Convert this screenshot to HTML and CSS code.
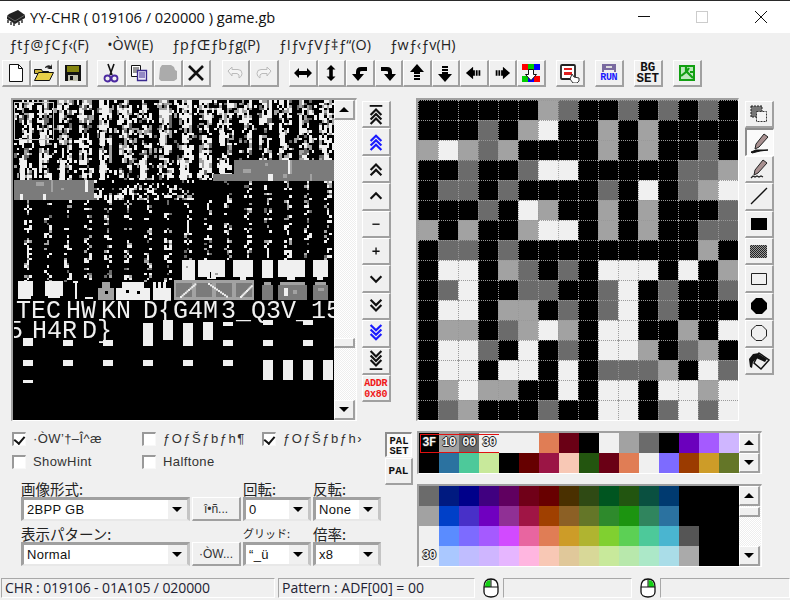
FILE: index.html
```html
<!DOCTYPE html>
<html lang="en">
<head>
<meta charset="utf-8">
<title>YY-CHR</title>
<link rel="stylesheet" href="styles.css">
</head>
<body>
<svg class="defs" width="0" height="0">
  <defs>
    <g id="chev"><path d="M4 8l6-6 6 6" fill="none" stroke-width="2.4"/></g>
    <path id="a-h" d="M1 10 6 5v3h8V5l5 5-5 5v-3H6v3z"/>
    <path id="a-c" d="M17 4h-6Q6 4 6 9v2H2l6 7 6-7h-4V9q0-1 2-1h5z"/>
    <path id="a-d" d="M10 1l7 8h-4v2H7V9H3zM7 12h6v2H7zM7 15h6v2H7z"/>
  </defs>
</svg>
<header class="titlebar">
  <svg class="appicon" width="20" height="17" viewBox="0 0 20 17"><path d="M3 5l9-4 7 5v3l-10 6-8-5V7z" fill="#222"/><path d="M1 7l8 5 10-6" fill="none" stroke="#666"/><path d="M2 11v3M5 13v3M8 14v3M13 13v3M16 11v3" stroke="#333" stroke-width="1.5"/></svg>
  <span class="title">YY-CHR ( 019106 / 020000 ) game.gb</span>
  <div class="winctl">
    <span class="wc"><svg width="14" height="14" viewBox="0 0 14 14"><path d="M1 6.500h12" stroke="#111"/></svg></span>
    <span class="wc"><svg width="14" height="14" viewBox="0 0 14 14"><rect x="1.500" y="1.500" width="11" height="11" fill="none" stroke="#ccc"/></svg></span>
    <span class="wc"><svg width="14" height="14" viewBox="0 0 14 14"><path d="M1 1l12 12M13 1L1 13" stroke="#111"/></svg></span>
  </div>
</header>
<nav class="menubar">
  <span>ƒtƒ@ƒCƒ‹(F)</span><span>•ÒW(E)</span><span>ƒpƒŒƒbƒg(P)</span><span>ƒIƒvƒVƒ‡ƒ“(O)</span><span>ƒwƒ‹ƒv(H)</span>
</nav>
<div class="toolbar">
  <button class="btn tb"><svg width="20" height="20" viewBox="0 0 20 20"><path d="M3.500 1.500h9l4 4v13h-13z" fill="#fff" stroke="#111"/><path d="M12.500 1.500v4h4" fill="none" stroke="#111"/></svg></button>
  <button class="btn tb"><svg width="22" height="20" viewBox="0 0 22 20"><path d="M1.500 6.500h7l1 2h6v2h-14z" fill="#c8b038" stroke="#111"/><path d="M1.500 17.500l4-8h15l-4 8z" fill="#e8d048" stroke="#111"/><path d="M12 4q3-3 6-1l1-2v5h-5l2-1q-2-1-4 0z" fill="#222"/></svg></button>
  <button class="btn tb"><svg width="20" height="20" viewBox="0 0 20 20"><path d="M2 2h16v16H2z" fill="#111"/><path d="M4 3h12v6H4z" fill="#858510"/><path d="M5 12h10v6H5z" fill="#c0c0b0"/><path d="M7 13h3v4H7z" fill="#111"/></svg></button>
  <button class="btn tb gap-s"><svg width="16" height="20" viewBox="0 0 16 20"><path d="M5 1l4 11M11 1L7 12" stroke="#111" stroke-width="1.6" fill="none"/><circle cx="4.500" cy="15.500" r="3" fill="none" stroke="#4a28a0" stroke-width="1.800"/><circle cx="11.500" cy="15.500" r="3" fill="none" stroke="#4a28a0" stroke-width="1.800"/></svg></button>
  <button class="btn tb"><svg width="20" height="20" viewBox="0 0 20 20"><path d="M2.500 2.500h9v11h-9z" fill="#fff" stroke="#111"/><path d="M4 5h6M4 7h6M4 9h6" stroke="#333"/><path d="M8.500 7.500h9v10h-9z" fill="#ece8f8" stroke="#3a2a90" stroke-width="1.300"/><path d="M10 10h6M10 12h6M10 14h6" stroke="#3a2a90"/></svg></button>
  <button class="btn tb"><svg width="22" height="20" viewBox="0 0 22 20"><path d="M3 5l2-3h9l3 2 1 3 2 1v8l-3 2H4l-2-2z" fill="#ababab"/></svg></button>
  <button class="btn tb"><svg width="20" height="20" viewBox="0 0 20 20"><path d="M3 3l14 14M17 3L3 17" stroke="#111" stroke-width="2.600"/></svg></button>
  <button class="btn tb gap-m"><svg width="20" height="20" viewBox="0 0 20 20"><path d="M3 8l4-4v2.500h6q4 0 4 4 0 3-3 4.500 1-4-2-4.500H7V13z" fill="#f4f4f4" stroke="#bbb"/></svg></button>
  <button class="btn tb"><svg width="20" height="20" viewBox="0 0 20 20"><path d="M17 8l-4-4v2.500H7q-4 0-4 4 0 3 3 4.500-1-4 2-4.500h5V13z" fill="#f4f4f4" stroke="#bbb"/></svg></button>
  <button class="btn tb gap-m"><svg width="20" height="20" viewBox="0 0 20 20"><use href="#a-h"/></svg></button>
  <button class="btn tb"><svg class="rot90" width="18" height="18" viewBox="0 0 20 20"><use href="#a-h"/></svg></button>
  <button class="btn tb"><svg width="20" height="20" viewBox="0 0 20 20"><use href="#a-c"/></svg></button>
  <button class="btn tb"><svg class="flipx" width="20" height="20" viewBox="0 0 20 20"><use href="#a-c"/></svg></button>
  <button class="btn tb"><svg width="20" height="20" viewBox="0 0 20 20"><use href="#a-d"/></svg></button>
  <button class="btn tb"><svg class="rot180" width="20" height="20" viewBox="0 0 20 20"><use href="#a-d"/></svg></button>
  <button class="btn tb"><svg class="rot270" width="18" height="18" viewBox="0 0 20 20"><use href="#a-d"/></svg></button>
  <button class="btn tb"><svg class="rot90" width="18" height="18" viewBox="0 0 20 20"><use href="#a-d"/></svg></button>
  <button class="btn tb"><svg width="20" height="20" viewBox="0 0 20 20"><path d="M1 1h6v6H1z" fill="#f00"/><path d="M7 1h6v6H7zM1 13h6v6H1z" fill="#0c0"/><path d="M13 1h6v6h-6zM7 13h6v6H7z" fill="#00f"/><path d="M13 13h6v6h-6z" fill="#f00"/><path d="M7.500 6.500h5v5h3l-5.500 6-5.500-6h3z" fill="#fff" stroke="#111"/></svg></button>
  <button class="btn tb gap-m"><svg width="22" height="20" viewBox="0 0 22 20"><rect x="2" y="2" width="14" height="14" rx="1" fill="#fff" stroke="#222" stroke-width="1.800"/><path d="M5 5h8v2H5zM5 9h8v3H5z" fill="#e02020"/><path d="M13 11l2 3 5 1v3l-2 2h-4l-3-4z" fill="#fff" stroke="#333"/></svg></button>
  <button class="btn tb gap-l run"><svg width="18" height="10" viewBox="0 0 18 10"><path d="M2 1h14v8h-2V7H4v2H2z" fill="#7a6aa0"/><path d="M6 3h6v2H6z" fill="#ddd"/></svg><span class="runlabel">RUN</span></button>
  <button class="btn tb gap-l bitlabel">BG<br>SET</button>
  <button class="btn tb gap-l"><svg width="20" height="20" viewBox="0 0 20 20"><path d="M2 2h16v16H2z" fill="#12a012"/><path d="M4 4h12v12H4z" fill="#bde8bd"/><path d="M9 4v5L4 13M9 8l7 7M12 5l-2 3M13 9h3" stroke="#12a012" stroke-width="2.200" fill="none"/></svg></button>
</div>

<main class="work">
  <section class="viewer">
    <div class="chrwrap">
      <canvas id="chr" class="chr" width="320" height="320"></canvas>
      <div class="selbox"></div>
      <div class="chrtext line1"><span>TEC</span><span class="w1">HW</span><span class="w1">KN</span><span class="w2">D{G4M</span><span class="w3">3_Q3V_15</span></div>
      <div class="chrtext line2"><span>5</span><span class="w4">H4</span><span>R</span><span class="w1">D}</span></div>
    </div>
    <div class="vscroll tall">
      <button class="btn sb"><i class="tri-up"></i></button>
      <div class="track"><button class="btn thumb thumb-chr"></button></div>
      <button class="btn sb"><i class="tri-dn"></i></button>
    </div>
  </section>

  <div class="navcol">
    <button class="btn nb"><svg class="blk" width="18" height="22" viewBox="0 0 20 24"><path d="M3 2h14v2H3z" stroke="none"/><use href="#chev" y="5"/><use href="#chev" y="10"/><use href="#chev" y="15"/></svg></button>
    <button class="btn nb"><svg class="blu" width="18" height="22" viewBox="0 0 20 24"><use href="#chev" y="3"/><use href="#chev" y="8"/><use href="#chev" y="13"/></svg></button>
    <button class="btn nb"><svg class="blk" width="18" height="18" viewBox="0 0 20 20"><use href="#chev" y="3"/><use href="#chev" y="9"/></svg></button>
    <button class="btn nb"><svg class="blk thin" width="18" height="18" viewBox="0 0 20 20"><use href="#chev" y="5"/></svg></button>
    <button class="btn nb"><svg class="blk" width="18" height="18" viewBox="0 0 20 20"><path d="M6 9.500h8v1.500H6z" stroke="none"/></svg></button>
    <button class="btn nb"><svg class="blk" width="18" height="18" viewBox="0 0 20 20"><path d="M6 9.500h8v1.500H6zM9.300 6h1.500v8H9.300z" stroke="none"/></svg></button>
    <button class="btn nb"><svg class="blk thin flipy" width="18" height="18" viewBox="0 0 20 20"><use href="#chev" y="5"/></svg></button>
    <button class="btn nb"><svg class="blk flipy" width="18" height="18" viewBox="0 0 20 20"><use href="#chev" y="3"/><use href="#chev" y="9"/></svg></button>
    <button class="btn nb"><svg class="blu flipy" width="18" height="22" viewBox="0 0 20 24"><use href="#chev" y="3"/><use href="#chev" y="8"/><use href="#chev" y="13"/></svg></button>
    <button class="btn nb"><svg class="blk flipy" width="18" height="22" viewBox="0 0 20 24"><path d="M3 2h14v2H3z" stroke="none"/><use href="#chev" y="5"/><use href="#chev" y="10"/><use href="#chev" y="15"/></svg></button>
    <button class="btn nb addr">ADDR<br>0x80</button>
  </div>

  <section class="editor"><div id="grid" class="grid"></div></section>

  <div class="toolcol">
    <button class="btn nb"><svg width="20" height="20" viewBox="0 0 20 20"><path d="M2 2h11v11H2z" fill="#777" stroke="#222" stroke-dasharray="2 1"/><path d="M7.500 7.500h10v10h-10z" fill="#f4f4f4" stroke="#333" stroke-dasharray="2 1"/></svg></button>
    <button class="btn nb pressed"><svg width="22" height="22" viewBox="0 0 22 22"><path d="M15 2l4 3-9 10-4 2 1-5z" fill="#a89090" stroke="#222"/><path d="M2 20l5-2h12l-8 1-8 2z" fill="#111" stroke="#111"/></svg></button>
    <button class="btn nb"><svg width="22" height="22" viewBox="0 0 22 22"><path d="M15 2l4 3-9 10-4 2 1-5z" fill="#a89090" stroke="#222"/><path d="M3 20l2-2 2 1 2-1 2 1 2-1 2 1" fill="none" stroke="#222" stroke-width="1.300"/></svg></button>
    <button class="btn nb"><svg width="20" height="20" viewBox="0 0 20 20"><path d="M2 18L18 2" stroke="#111" stroke-width="1.300"/></svg></button>
    <button class="btn nb"><svg width="18" height="12" viewBox="0 0 18 12"><path d="M1 0h16v12H1z" fill="#000"/></svg></button>
    <button class="btn nb"><span class="dither"></span></button>
    <button class="btn nb"><svg width="18" height="12" viewBox="0 0 18 12"><path d="M1.500.5h15v11h-15z" fill="none" stroke="#222"/></svg></button>
    <button class="btn nb"><svg width="18" height="18" viewBox="0 0 18 18"><path d="M6 1h6l5 5v6l-5 5H6l-5-5V6z" fill="#000"/></svg></button>
    <button class="btn nb"><svg width="18" height="18" viewBox="0 0 18 18"><path d="M6 1.500h6l4.500 4.500v6L12 16.500H6L1.500 12V6z" fill="none" stroke="#222"/></svg></button>
    <button class="btn nb"><svg width="22" height="20" viewBox="0 0 22 20"><path d="M11 2l10 7-8 9-7-6z" fill="#eee" stroke="#111" stroke-width="1.500"/><path d="M11 2L5 3 1 8l1 8 2 1 1-6 3-3z" fill="#111"/><path d="M8 7l9 4 2-3-8-5z" fill="#111"/></svg></button>
  </div>
</main>

<section class="lower">
  <div class="controls">
    <div class="checks">
      <label class="chk"><i class="box on"></i>·ÒW’†–Î^æ</label>
      <label class="chk wide"><i class="box"></i>ƒOƒŠƒbƒh¶</label>
      <label class="chk wide"><i class="box on"></i>ƒOƒŠƒbƒh›</label>
      <label class="chk"><i class="box"></i>ShowHint</label>
      <label class="chk"><i class="box"></i>Halftone</label>
    </div>
    <div class="formrow first">
      <div class="field f-wide"><span class="jp">画像形式:</span><div class="combo"><span>2BPP GB</span><i class="drop"></i></div></div>
      <button class="btn act">î•ñ...</button>
      <div class="field f-sm"><span class="jp">回転:</span><div class="combo"><span>0</span><i class="drop"></i></div></div>
      <div class="field f-sm"><span class="jp">反転:</span><div class="combo"><span>None</span><i class="drop"></i></div></div>
    </div>
    <div class="formrow">
      <div class="field f-wide"><span class="jp">表示パターン:</span><div class="combo"><span>Normal</span><i class="drop"></i></div></div>
      <button class="btn act">·ÒW...</button>
      <div class="field f-sm"><span class="jp narrow">グリッド:</span><div class="combo"><span>“_ü</span><i class="drop"></i></div></div>
      <div class="field f-sm"><span class="jp">倍率:</span><div class="combo"><span>x8</span><i class="drop"></i></div></div>
    </div>
  </div>
  <div class="palcol">
    <div class="palbtns">
      <button class="btn palset pressed">PAL<br>SET</button>
      <button class="btn palbtn">PAL</button>
    </div>
    <div class="palframes">
      <div class="frame fr1">
        <div class="selbar"><div id="pal1" class="swatches two"></div><div class="redsel"></div></div>
        <div class="vscroll">
          <button class="btn sb"><i class="tri-up"></i></button>
          <button class="btn sb"><i class="tri-dn"></i></button>
        </div>
      </div>
      <div class="frame fr2">
        <div id="pal2" class="swatches four"></div>
        <div class="vscroll">
          <button class="btn sb"><i class="tri-up"></i></button>
          <div class="track"><button class="btn thumb"></button></div>
          <button class="btn sb"><i class="tri-dn"></i></button>
        </div>
      </div>
    </div>
  </div>
</section>

<footer class="status">
  <div class="panel p1">CHR : 019106 - 01A105 / 020000</div>
  <div class="panel p2">Pattern : ADF[00] = 00</div>
  <svg class="mouse" width="16" height="20" viewBox="0 0 16 20"><path d="M8 1C3 1 1 4 1 9v5c0 3 3 5 7 5s7-2 7-5V9c0-5-2-8-7-8z" fill="#fff" stroke="#111" stroke-width="1.300"/><path d="M7.500 2C4 2.200 2 4.500 2 9h5.500z" fill="#12d012"/><path d="M1 9h14M8 1v8" stroke="#111"/></svg>
  <div class="panel p3"></div>
  <svg class="mouse" width="16" height="20" viewBox="0 0 16 20"><path d="M8 1C3 1 1 4 1 9v5c0 3 3 5 7 5s7-2 7-5V9c0-5-2-8-7-8z" fill="#fff" stroke="#111" stroke-width="1.300"/><path d="M8.500 2C12 2.200 14 4.500 14 9H8.500z" fill="#12d012"/><path d="M1 9h14M8 1v8" stroke="#111"/></svg>
  <div class="panel p4"></div>
</footer>
<script src="script.js"></script>
</body>
</html>
```
FILE: styles.css
```css
* { box-sizing: border-box; }
html, body { margin: 0; padding: 0; }
body {
  width: 790px; height: 600px; overflow: hidden;
  background: #f0f0f0; color: #111;
  font-family: "Liberation Sans", Arial, sans-serif; font-size: 13px;
  display: flex; flex-direction: column;
}
.defs { position: absolute; }
.titlebar {
  height: 33px; flex: none; background: #fff; border-top: 1px solid #2a2a2a;
  display: flex; align-items: center; padding-left: 6px;
}
.appicon { flex: none; margin-top: 1px; }
.title { margin-left: 4px; font: 14.6px "Open Sans", sans-serif; color: #111; white-space: nowrap; }
.winctl { margin-left: auto; display: flex; }
.wc { width: 58.5px; height: 32px; display: flex; align-items: center; justify-content: center; }
.menubar {
  height: 25px; flex: none; display: flex; align-items: center; gap: 18.5px; padding: 0 0 3px 9px;
  font: 14.3px "Open Sans", sans-serif; color: #222;
}
.toolbar { height: 32px; flex: none; display: flex; padding: 2px 0 0 2px; }

.btn {
  margin: 0; padding: 0; background: #f0f0f0; color: #111;
  border-style: solid; border-width: 1px 2px 2px 1px;
  border-color: #fff #a0a0a0 #a0a0a0 #fff;
  display: flex; align-items: center; justify-content: center; flex-direction: column;
}
.btn.pressed {
  border-color: #8c8c8c #fff #fff #8c8c8c; border-width: 2px 1px 1px 2px;
  background: #fafafa;
}
.tb { width: 28.500px; height: 27px; flex: none; }
.gap-s { margin-left: 9.500px; }
.gap-m { margin-left: 10.500px; }
.gap-l { margin-left: 10.500px; }
.rot90 { transform: rotate(90deg); }
.rot180 { transform: rotate(180deg); }
.rot270 { transform: rotate(270deg); }
.flipx { transform: scaleX(-1); }
.flipy { transform: scaleY(-1); }
.run { gap: 0; }
.runlabel { font: 700 10px/10px "Liberation Mono", monospace; color: #1a1aff; letter-spacing: -.3px; }
.bitlabel { font: 700 12.5px/11px "Liberation Mono", monospace; color: #111; display: block; text-align: center; padding-top: 1px; }

.work { height: 340px; flex: none; display: flex; align-items: flex-start; padding: 8px 0 0 11px; }
.viewer {
  width: 346px; height: 323px; flex: none; display: flex; background: #000;
  border-style: solid; border-width: 2px 1px 1px 2px; border-color: #a0a0a0 #fff #fff #a0a0a0;
  padding-left: 1px;
}
.chrwrap { position: relative; width: 320px; height: 320px; overflow: hidden; flex: none; }
.chr { display: block; width: 320px; height: 320px; }
.selbox { position: absolute; left: 0; top: 2px; width: 40px; height: 38px; border: 1px solid #c8c8c8; }
.chrtext {
  position: absolute; display: flex; white-space: pre; color: #f0f0f0;
  font: 25px/20px "Liberation Mono", monospace;
}
.line1 { left: 2px; top: 202px; }
.line2 { left: -6px; top: 222px; }
.w1 { margin-left: 5px; }
.w2 { margin-left: 12px; }
.w3 { margin-left: 3px; }
.w4 { margin-left: 9px; }

.vscroll { width: 22px; flex: none; display: flex; flex-direction: column; background: #f0f0f0; }
.sb { width: 21px; height: 20px; flex: none; }
.tri-up, .tri-dn { display: block; width: 0; height: 0; border-left: 5px solid transparent; border-right: 5px solid transparent; }
.tri-up { border-bottom: 5px solid #000; }
.tri-dn { border-top: 5px solid #000; }
.track { flex: 1; position: relative; background: repeating-conic-gradient(#fff 0 25%, #eee 0 50%) 0 0 / 2px 2px; }
.thumb { width: 21px; height: 10px; position: absolute; left: 0; top: 1px; }
.thumb-chr { top: 218px; }

.navcol { width: 28.500px; flex: none; margin: 3px 0 0 5px; display: flex; flex-direction: column; }
.toolcol { width: 28.500px; flex: none; margin: 3px 0 0 6px; display: flex; flex-direction: column; }
.nb { height: 27.400px; width: 28.500px; flex: none; }
.blk { stroke: #111; fill: #111; }
.blu { stroke: #1a1aff; fill: #1a1aff; }
.thin { stroke-width: .7; }
.blk use, .blu use { fill: none; }
.addr { font: 700 10px/11px "Liberation Mono", monospace; color: #f01818; display: block; text-align: center; padding-top: 2px; letter-spacing: -.3px; }

.editor {
  width: 323px; height: 323px; flex: none; margin-left: 25.500px;
  border-style: solid; border-width: 2px 1px 1px 2px; border-color: #a0a0a0 #fff #fff #a0a0a0;
}
.grid { display: grid; grid-template-columns: repeat(16, 20px); grid-auto-rows: 20px; }
.grid i { display: block; border-top: 1px dotted #999; border-left: 1px dotted #999; }
.k { background: #000; }
.d { background: #6b6b6b; }
.l { background: #a2a2a2; }
.w { background: #f0f0f0; }
.dither { display: block; width: 17px; height: 13px; background: repeating-conic-gradient(#222 0 25%, #999 0 50%) 0 0 / 2px 2px; }

.lower { height: 148px; flex: none; display: flex; padding-top: 1px; }
.controls { width: 373px; margin-left: 12px; flex: none; }
.checks { display: grid; grid-template-columns: 130px 120px 1fr; grid-auto-rows: 23px; height: 50px; padding-top: 1px; }
.chk { display: flex; align-items: flex-start; gap: 7px; font-size: 13px; letter-spacing: .4px; line-height: 14px; color: #333; white-space: nowrap; }
.chk.wide { letter-spacing: 1.5px; }
.box {
  width: 14px; height: 14px; flex: none; background: #fff; position: relative;
  border-style: solid; border-width: 2px 1px 1px 2px; border-color: #999 #f8f8f8 #f8f8f8 #999;
}
.box.on::after {
  content: ""; position: absolute; left: 2px; top: 0px; width: 5px; height: 8px;
  border: solid #111; border-width: 0 2px 2px 0; transform: rotate(40deg);
}
.formrow { display: flex; margin-left: 9px; align-items: flex-end; height: 39px; }
.formrow.first { margin-top: 1px; margin-bottom: 6px; }
.field { display: flex; flex-direction: column; flex: none; }
.f-wide { width: 169px; }
.f-sm { width: 68px; margin-left: 2px; }
.jp { font: 14.500px/13px "Noto Sans CJK JP", sans-serif; height: 15px; color: #222; white-space: nowrap; }
.narrow { font-size: 11px; }
.combo {
  height: 24px; background: #fff; display: flex; align-items: center; padding-left: 3px;
  border-style: solid; border-width: 3px 3px 2px 3px; border-color: #a0a0a0 #c4c4c4 #e8e8e8 #a0a0a0;
  letter-spacing: .3px; white-space: nowrap; overflow: hidden;
}
.combo span { flex: 1; }
.drop {
  width: 19px; height: 19px; flex: none; background: #f0f0f0; position: relative;
}
.drop::after {
  content: ""; position: absolute; left: 4px; top: 7px; border-left: 5px solid transparent; border-right: 5px solid transparent; border-top: 5px solid #000;
}
.act { width: 49px; height: 24px; flex: none; margin-left: 2px; font: 12px "Liberation Sans", sans-serif; color: #333; }

.palcol { flex: none; display: flex; }
.palbtns { width: 28px; margin-top: 0; display: flex; flex-direction: column; flex: none; padding-top: 1px; }
.palset { width: 27px; height: 25px; font: 700 10.500px/10px "Liberation Mono", monospace; display: block; text-align: center; padding-top: 1px; }
.palbtn { width: 28px; height: 27px; margin-top: 1px; font: 700 11px "Liberation Mono", monospace; }
.palframes { margin-left: 4px; }
.frame {
  width: 345px; display: flex; background: #000;
  border-style: solid; border-width: 2px 1px 1px 2px; border-color: #a0a0a0 #fff #fff #a0a0a0;
}
.fr1 { height: 43px; }
.fr2 { height: 83px; margin-top: 10px; }
.swatches { display: grid; grid-template-columns: repeat(16, 20px); grid-auto-rows: 20px; width: 320px; flex: none; }
.swatches i { display: flex; align-items: center; justify-content: center; font: 700 12px "Liberation Mono", monospace; color: #f4f4f4; text-shadow: -1px 0 #222, 1px 0 #222, 0 -1px #222, 0 1px #222; letter-spacing: -.5px; }
.selbar { position: relative; width: 320px; flex: none; }
.redsel { position: absolute; left: 1px; top: 1px; width: 79px; height: 19px; border: 1px solid #e01010; border-right: 0; }

.status { height: 20px; flex: none; display: flex; align-items: stretch; padding-left: 1px; }
.panel {
  border-style: solid; border-width: 1px; border-color: #a8a8a8 #fff #fff #a8a8a8; height: 20px;
  font: 14px/18px "Open Sans", sans-serif; color: #223; padding-left: 3px; white-space: nowrap; overflow: hidden;
}
.p1 { width: 274px; letter-spacing: -.1px; }
.p2 { width: 197px; margin-left: 3px; }
.p3 { width: 129px; margin-left: 4px; }
.p4 { width: 130px; margin-left: 3px; }
.mouse { flex: none; margin-left: 8px; }
.mouse + .panel { margin-left: 4px; }
```
FILE: script.js
```js
(function () {
  var K = '#000', D = '#6b6b6b', L = '#a2a2a2', W = '#f0f0f0', G = '#7b7b7b';

  /* ---------- pattern editor ---------- */
  var rows = [
    'KKKKKKLDKKDKDKDK','KKKDKLWKKLKLKKKK','LWLDLKKKKLKLKKDK','KKDKKDWWKKKKKDDL',
    'KDDKDKKKKDKWKDLW','KKKDKWLKKLKLKKKD','LKLKKLWWKLKLKKDD','KDDKDKKKKKKKKKLK',
    'KWWKLDKDKWWWKWKL','KDWKKDDKKDWKDKKD','KWWKLLKDKDWKDKKK','KLLKDLWLKWWKKLKW',
    'KWWDKWKDKWWLKDLK','KWWKWWKWKDDDLKWD','KLWLLKKWKWWKWWLW','KDLKKKDKKWWKDWDW'
  ];
  var grid = document.getElementById('grid');
  rows.forEach(function (r) {
    r.split('').forEach(function (c) {
      var cell = document.createElement('i');
      cell.className = c.toLowerCase();
      grid.appendChild(cell);
    });
  });

  /* ---------- palettes ---------- */
  function swatches(id, colors, labels) {
    var host = document.getElementById(id);
    colors.forEach(function (c, i) {
      var s = document.createElement('i');
      s.style.backgroundColor = c;
      if (labels[i]) s.textContent = labels[i];
      host.appendChild(s);
    });
  }
  swatches('pal1', [
    '#000','#a2a2a2','#6b6b6b','#f0f0f0','#f0f0f0','#f0f0f0','#e07d55','#6a0015',
    '#000','#f0f0f0','#a2a2a2','#6b6b6b','#000','#6b00bd','#a55aff','#cfb6ff',
    '#000','#2b72a0','#4dc99a','#c8e99b','#000','#660000','#9b1545','#f8c8b5',
    '#23550f','#6a0015','#e07d55','#f0f0f0','#7d6bff','#9b3b00','#cd9c28','#647628'
  ], { 0: '3F', 1: '10', 2: '00', 3: '30' });
  swatches('pal2', [
    '#6b6b6b','#001a80','#00008a','#400080','#600060','#700018','#680000','#4a3000',
    '#2f4a14','#005520','#225510','#0a5040','#003a70','#000','#000','#000',
    '#a2a2a2','#0040c8','#4830c8','#7000c0','#903095','#a01545','#a04000','#8c6025',
    '#647628','#2e8a2c','#1c9410','#30855e','#2b72a0','#000','#000','#000',
    '#f0f0f0','#5a8cff','#7d6bff','#a55aff','#d24aff','#e865a0','#e07d55','#cd9c28',
    '#b0b430','#80d030','#5cd055','#4dc99a','#4ab5d0','#555','#000','#000',
    '#f0f0f0','#aac8ff','#c0bdff','#cfb6ff','#e6b6ff','#ffb6e0','#f8c8b5','#e0c89a',
    '#d8d898','#c8e99b','#b8e8ac','#ace8c8','#aadde8','#aaa','#000','#000'
  ], { 48: '30' });

  /* ---------- CHR sheet (128x128 tiles scaled 2.5x) ---------- */
  var ctx = document.getElementById('chr').getContext('2d');
  ctx.fillStyle = K;
  ctx.fillRect(0, 0, 320, 320);
  var seed = 90210;
  function rnd() { seed = (seed * 1664525 + 1013904223) >>> 0; return seed / 4294967296; }
  function px(x, y, c) {
    var x0 = Math.round(x * 2.5), y0 = Math.round(y * 2.5);
    ctx.fillStyle = c;
    ctx.fillRect(x0, y0, Math.round((x + 1) * 2.5) - x0, Math.round((y + 1) * 2.5) - y0);
  }
  /* rect given in page coordinates */
  function R(x, y, w, h, c) { ctx.fillStyle = c; ctx.fillRect(x - 14, y - 100, w, h); }
  function tone() { var r = rnd(); return r < 0.62 ? W : r < 0.85 ? L : D; }

  var x, y, tx, ty, cx, p;
  var cols = [];
  for (x = 0; x < 128; x += 1) {
    /* per column density, with a black gutter in every tile */
    var c8 = x & 7;
    cols[x] = (c8 === 0 || c8 === 1 || c8 === 7) ? 0.08 : (0.3 + rnd() * 0.35);
  }
  for (y = 0; y < 80; y += 1) {
    for (x = 0; x < 128; x += 1) {
      tx = x >> 3; ty = y >> 3; cx = x & 7;
      if (ty < 4) {
        p = cols[x];
        if (ty === 0) p += 0.14;
        if (rnd() < p) {
          var t = tone();
          px(x, y, t);
          if (y < 31 && rnd() < 0.4) { px(x, y + 1, t); }
        }
      } else if (ty === 4 && tx >= 4 && tx <= 8) {
        p = y < 35 ? 0.12 : 0.45;
        if (cx < 2 && y > 36) p = 0.65;
        if (rnd() < p) px(x, y, tone());
      } else if (y >= (tx >= 10 ? 32 : 40)) {
        if (cx >= 4 && cx <= 6 && rnd() < (cx === 5 ? 0.5 : 0.28)) px(x, y, tone());
      }
    }
  }
  /* white bars in the upper rows */
  for (tx = 0; tx < 16; tx += 1) {
    if (tx % 2 === 0) R(14 + tx * 20 + 6, 160, 5, 20, W);
    if (tx % 3 === 1) R(14 + tx * 20 + 6, 132, 5, 14, W);
  }
  /* grey bands */
  R(234, 160, 100, 21, G); R(213, 174, 121, 7, G); R(14, 180, 80, 20, G);
  R(36, 182, 8, 4, L); R(51, 180, 2, 12, L); R(61, 188, 3, 2, L); R(85, 180, 3, 12, W);
  R(43, 194, 3, 6, W); R(20, 194, 3, 6, W);
  R(243, 169, 8, 4, L); R(288, 160, 4, 14, W); R(268, 174, 5, 7, W); R(283, 174, 4, 4, L); R(310, 174, 2, 7, L);
  R(290, 160, 2, 14, L); R(265, 163, 3, 3, L);
  /* clear lower rows for the sprites and text */
  R(14, 300, 320, 120, K);
  R(14, 282, 185, 18, K);
  R(190, 260, 144, 40, K);
  R(182, 260, 13, 20, W); R(186, 266, 2, 2, L);
  /* sprite row */
  [[198, 260, 27, 17], [233, 260, 20, 17], [262, 260, 11, 18], [278, 260, 27, 17], [313, 260, 15, 17]].forEach(function (b) { R(b[0], b[1], b[2], b[3], W); });
  R(207, 276, 9, 3, W); R(240, 276, 6, 4, W); R(287, 276, 8, 4, W); R(317, 276, 6, 4, W);
  R(210, 272, 1, 6, K); R(215, 273, 3, 2, L);
  [[18, 281, 15, 18], [45, 281, 18, 15]].forEach(function (b) { R(b[0], b[1], b[2], b[3], W); });
  R(48, 295, 12, 3, W); R(31, 296, 3, 3, K);
  R(73, 281, 5, 2, W); R(75, 283, 2, 16, W); R(85, 297, 8, 2, W);
  R(98, 288, 16, 12, L); R(102, 282, 8, 6, L); R(105, 291, 3, 3, K);
  R(116, 288, 34, 12, W); R(122, 282, 22, 6, W); R(126, 290, 3, 3, K); R(137, 291, 3, 3, K);
  R(153, 282, 3, 6, W); R(158, 282, 3, 6, W); R(163, 282, 3, 6, W); R(153, 288, 18, 12, W);
  /* crate tiles */
  [[174, 280, 20], [194, 280, 20], [214, 280, 20], [234, 280, 20]].forEach(function (b) {
    R(b[0], b[1], b[2], 20, L); R(b[0] + 2, b[1] + 3, b[2] - 4, 14, G);
  });
  for (x = 0; x < 20; x += 2) { R(208 + x, 283 + x * 0.7, 2, 2, W); R(180 + x * 0.8, 296 - x * 0.7, 2, 2, W); R(240 + x * 0.6, 296 - x * 0.6, 2, 2, W); }
  [[262, 285, 11], [278, 285, 29], [313, 285, 15]].forEach(function (b) { R(b[0], b[1], b[2], 15, G); });
  R(264, 282, 7, 3, L); R(280, 282, 25, 3, L); R(315, 282, 11, 3, L);
  R(284, 288, 4, 8, W); R(293, 290, 4, 4, L); R(318, 288, 6, 3, L);
  /* blocks below the text */
  var blocks = [
    [23, 338, 10, 8], [63, 340, 10, 6], [103, 340, 10, 6],
    [143, 323, 10, 23], [163, 320, 10, 20], [183, 323, 10, 23], [203, 322, 10, 18],
    [223, 322, 10, 4], [223, 340, 10, 6], [263, 320, 10, 5], [263, 340, 10, 6], [303, 320, 10, 5], [303, 340, 10, 6],
    [23, 360, 10, 6], [63, 360, 10, 6], [103, 360, 10, 6], [143, 360, 10, 6], [183, 360, 10, 6], [223, 360, 10, 6],
    [263, 360, 10, 20], [283, 360, 10, 20], [303, 360, 10, 20], [323, 360, 10, 20],
    [23, 380, 10, 3]
  ];
  blocks.forEach(function (b) { R(b[0], b[1], b[2], b[3], W); });
})();
```
